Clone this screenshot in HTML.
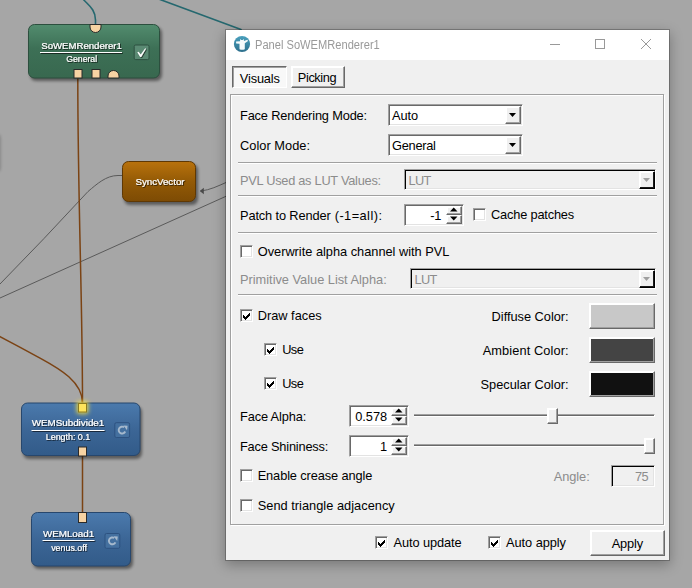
<!DOCTYPE html>
<html><head><meta charset="utf-8"><title>Panel SoWEMRenderer1</title>
<style>
html,body{margin:0;padding:0}
body{width:692px;height:588px;overflow:hidden;background:#a6a6a6;position:relative;font-family:"Liberation Sans",sans-serif}
#net{position:absolute;left:0;top:0}
.node{position:absolute;box-sizing:border-box;border-radius:7px;box-shadow:2px 3px 4px rgba(0,0,0,.35)}
.nt{position:absolute;color:#fff;font-size:9.7px;line-height:12px;white-space:nowrap;text-shadow:1px 1px 1px rgba(0,0,0,.7)}
.ul{position:absolute;height:1px;background:#fff;box-shadow:1px 1px 1px rgba(0,0,0,.5)}
.win{position:absolute;left:226px;top:30px;width:443px;height:530px;background:#f0f0f0;box-shadow:0 0 0 1px rgba(0,0,0,.24),0 4px 12px 1px rgba(0,0,0,.28)}
.tb{position:absolute;left:0;top:0;width:443px;height:30px;background:#fff}
.t{position:absolute;font-size:12.8px;line-height:16px;color:#000;white-space:nowrap}
.t.dis{color:#8c8c8c}
.abs{position:absolute;box-sizing:border-box}
.sunk{border:1px solid;border-color:#a0a0a0 #fff #fff #a0a0a0;box-shadow:inset 1px 1px 0 #696969,inset -1px -1px 0 #e3e3e3}
.rais{border:1px solid;border-color:#fff #696969 #696969 #fff;box-shadow:inset -1px -1px 0 #a0a0a0,inset 1px 1px 0 #fff;background:#f0f0f0}
.sunkd{box-shadow:inset 1px 1px 0 #000,inset -1px -1px 0 #e3e3e3}
.raisd{border-color:#fff #000 #000 #fff;box-shadow:inset -1px -1px 0 #1a1a1a,inset 1px 1px 0 #fff}
.sep{position:absolute;left:238px;width:419px;height:1px;background:#a0a0a0;box-shadow:0 1px 0 #fff}
.cb{position:absolute;box-sizing:border-box;width:13px;height:13px;background:#fff;border:1px solid;border-color:#a0a0a0 #fff #fff #a0a0a0;box-shadow:inset 1px 1px 0 #696969,inset -1px -1px 0 #e3e3e3}
</style></head><body>
<svg id="net" width="692" height="588" viewBox="0 0 692 588" font-family="Liberation Sans, sans-serif">
<defs>
<linearGradient id="gG" x1="0" y1="0" x2="0" y2="1"><stop offset="0" stop-color="#528c6e"/><stop offset=".45" stop-color="#3d7056"/><stop offset="1" stop-color="#38684f"/></linearGradient>
<linearGradient id="gO" x1="0" y1="0" x2="0" y2="1"><stop offset="0" stop-color="#b9720c"/><stop offset=".5" stop-color="#935a06"/><stop offset="1" stop-color="#7d4b04"/></linearGradient>
<linearGradient id="gB" x1="0" y1="0" x2="0" y2="1"><stop offset="0" stop-color="#4b7aad"/><stop offset=".5" stop-color="#3c6696"/><stop offset="1" stop-color="#325b89"/></linearGradient>
<filter id="sh" x="-20%" y="-20%" width="150%" height="160%"><feGaussianBlur stdDeviation="1.6"/></filter>
<filter id="ts" x="-10%" y="-30%" width="130%" height="180%"><feDropShadow dx="0.8" dy="0.8" stdDeviation="0.4" flood-color="#000" flood-opacity=".75"/></filter>
<filter id="glow" x="-100%" y="-100%" width="300%" height="300%"><feGaussianBlur stdDeviation="2"/></filter>
</defs>
<!-- off-screen node shadow at left -->
<rect x="-8" y="134" width="8.500" height="38" rx="4" fill="#000" opacity=".22" filter="url(#sh)"/>
<!-- connections -->
<g fill="none" stroke-linecap="round">
<path d="M83 -1 C88 5 95.5 9 95.5 20 L95.5 25" stroke="#25686f" stroke-width="1.6"/>
<path d="M160 -0.5 L241 29.5" stroke="#25686f" stroke-width="1.6"/>
<path d="M122 175.5 L118 175.5 C106 175.5 97 184 88 191.5 L44 238.500 L0 284" stroke="#5a5a5a" stroke-width="1"/>
<path d="M226 196.3 L0 298" stroke="#5a5a5a" stroke-width="1"/>
<path d="M226 182.5 C218 186 210 190 201 191" stroke="#5a5a5a" stroke-width="1"/>
<path d="M77.800 78 C77.800 200 82.5 300 82.5 403" stroke="#7b4314" stroke-width="1.500"/>
<path d="M0 336.6 L20.2 347.3 L40.5 358.4 C60 369 82.5 382 82.5 403" stroke="#7b4314" stroke-width="1.500"/>
<path d="M82.5 456 L82.5 513" stroke="#7b4314" stroke-width="1.500"/>
</g>
<path d="M199.800 191 L203.800 187.800 L203.800 194.200 Z" fill="#4a4a4a"/>
<!-- node shadows -->
<g fill="#000" opacity=".45" filter="url(#sh)">
<rect x="30" y="27" width="132" height="54" rx="6"/>
<rect x="124" y="164" width="74" height="41" rx="6"/>
<rect x="23" y="406" width="119" height="53" rx="6"/>
<rect x="33" y="515" width="100" height="54" rx="6"/>
</g>
<!-- nodes -->
<rect x="28.5" y="24.5" width="131" height="53.500" rx="6" fill="url(#gG)" stroke="#2c4f3e"/>
<rect x="122.500" y="161.500" width="73" height="40" rx="6" fill="url(#gO)" stroke="#5f3803"/>
<rect x="21.5" y="403" width="118.500" height="52.500" rx="6" fill="url(#gB)" stroke="#27476d"/>
<rect x="31.5" y="512.500" width="99" height="53.500" rx="6" fill="url(#gB)" stroke="#27476d"/>
<!-- connectors -->
<g fill="#f7d3a3" stroke="#2a2a2a" stroke-width="1">
<path d="M90 24.500 L101 24.500 L101 27 A5.500 5.500 0 0 1 90 27 Z"/>
<rect x="74" y="69.500" width="8" height="8.500"/>
<rect x="92" y="69.500" width="8" height="8.500"/>
<path d="M108 78 L108 76 A5.500 5.500 0 0 1 119 76 L119 78 Z"/>
<rect x="78.500" y="447" width="8" height="9"/>
<rect x="78.500" y="512.500" width="8" height="10"/>
</g>
<rect x="76.500" y="401" width="12" height="13" rx="3" fill="#ffe23a" opacity=".8" filter="url(#glow)"/>
<rect x="78.500" y="403.500" width="8" height="8.500" fill="#ffe45c" stroke="#8a7a20" stroke-width="1"/>
<!-- icons -->
<rect x="134.200" y="45" width="14.800" height="14.600" rx="1.500" fill="#5a8a73" stroke="#2d5040"/>
<path d="M137.300 52.300 L138.600 51.700 L140.700 54.600 L145.200 48.300 L146 48.800 L141.200 57 L140.200 57 Z" fill="#fff" filter="url(#ts)"/>
<g transform="translate(114.300 422.200)">
<rect x="0.500" y="0.500" width="14.800" height="14.800" rx="1.500" fill="#44709f" stroke="#2d5280"/>
<path d="M10.900 9.300 A3.400 3.400 0 1 1 9.800 5.100" fill="none" stroke="#a6b9cd" stroke-width="1.900"/>
<path d="M9.100 3.300 L13.300 3.500 L12.700 8.100 Z" fill="#a6b9cd"/>
</g>
<g transform="translate(104.500 533)">
<rect x="0.500" y="0.500" width="14.800" height="14.800" rx="1.500" fill="#44709f" stroke="#2d5280"/>
<path d="M10.900 9.300 A3.400 3.400 0 1 1 9.800 5.100" fill="none" stroke="#a6b9cd" stroke-width="1.900"/>
<path d="M9.100 3.300 L13.300 3.500 L12.700 8.100 Z" fill="#a6b9cd"/>
</g>
<!-- node text -->
<g fill="#fff" stroke="#fff" stroke-width=".15" filter="url(#ts)">
<text x="41.300" y="48.500" font-size="9.600" textLength="80.500" lengthAdjust="spacingAndGlyphs">SoWEMRenderer1</text>
<rect x="40" y="52" width="82" height="1" stroke="none"/>
<text x="66.300" y="61.800" font-size="8.700" textLength="30.800" lengthAdjust="spacingAndGlyphs">General</text>
<text x="135.400" y="184.900" font-size="9.800" textLength="49.200" lengthAdjust="spacingAndGlyphs">SyncVector</text>
<text x="31.700" y="426.400" font-size="9.700" textLength="72.600" lengthAdjust="spacingAndGlyphs">WEMSubdivide1</text>
<rect x="31.500" y="430" width="73" height="1" stroke="none"/>
<text x="45.800" y="439.900" font-size="8.700" textLength="44.400" lengthAdjust="spacingAndGlyphs">Length: 0.1</text>
<text x="43" y="537.300" font-size="9.700" textLength="51.100" lengthAdjust="spacingAndGlyphs">WEMLoad1</text>
<rect x="42.500" y="540" width="52" height="1" stroke="none"/>
<text x="51.200" y="550.700" font-size="8.700" textLength="35.800" lengthAdjust="spacingAndGlyphs">venus.off</text>
</g>
</svg>
<div class="win"><div class="tb"></div></div>
<!-- title bar -->
<svg class="abs" style="left:226px;top:30px" width="443" height="30" viewBox="226 30 443 30">
<defs><linearGradient id="ic" x1="0" y1="0" x2="0" y2="1"><stop offset="0" stop-color="#4aa0bd"/><stop offset="1" stop-color="#2d6f8c"/></linearGradient></defs>
<circle cx="242" cy="44" r="8.100" fill="url(#ic)"/>
<path d="M236 41.600 L240.100 41.200 L240 38.900 L241.200 39.900 L242.800 39.900 L244 38.900 L243.900 41.100 L247.400 39.800 L248 41 L244.800 43.300 L244.800 49.300 Q242.200 50.400 239.500 49.300 L239.500 43.700 L236.200 43.600 Z" fill="#f6fafb"/>
<g stroke="#999" stroke-width="1" fill="none">
<path d="M550 44.500 H560"/>
<rect x="595.500" y="39.500" width="9" height="9"/>
<path d="M641 39 L651 49 M651 39 L641 49"/>
</g>
</svg>
<div class="t" style="left:254.8px;top:37.200px;font-size:12px;transform:scaleX(.926);transform-origin:0 0;color:#999">Panel SoWEMRenderer1</div>
<!-- tabs -->
<div class="abs" style="left:232px;top:66px;width:55px;height:22px;border:1px solid;border-color:#696969 #fff #fff #696969;box-shadow:inset 1px 1px 0 #a0a0a0;background:#f8f8f8"></div>
<div class="abs rais" style="left:291px;top:66px;width:54px;height:22px"></div>
<!-- group frame -->
<div class="abs" style="left:230px;top:94px;width:434px;height:431px;border:1px solid #a0a0a0;box-shadow:inset 1px 1px 0 #fff,1px 1px 0 #fff"></div>
<!-- combos -->
<div class="abs sunk" style="left:388px;top:104px;width:135px;height:22px;background:#fff"></div>
<div class="abs rais" style="left:505px;top:106px;width:16px;height:18px"></div>
<svg class="abs" style="left:509px;top:113px" width="7" height="4"><path d="M0 0H7L3.500 4Z" fill="#000"/></svg>
<div class="abs sunk" style="left:388px;top:134px;width:135px;height:22px;background:#fff"></div>
<div class="abs rais" style="left:505px;top:136px;width:16px;height:18px"></div>
<svg class="abs" style="left:509px;top:143px" width="7" height="4"><path d="M0 0H7L3.500 4Z" fill="#000"/></svg>
<div class="sep" style="top:162px"></div>
<div class="abs sunk sunkd" style="left:404px;top:169px;width:252px;height:21px;background:#f0f0f0"></div>
<div class="abs rais raisd" style="left:639px;top:171px;width:16px;height:18px"></div>
<svg class="abs" style="left:643px;top:178px" width="7" height="4"><path d="M0 0H7L3.500 4Z" fill="#a0a0a0"/></svg>
<div class="sep" style="top:195px"></div>
<!-- spin patch -->
<div class="abs sunk" style="left:404px;top:204px;width:60px;height:22px;background:#fff"></div>
<div class="abs rais" style="left:446px;top:206px;width:16px;height:9px"></div>
<div class="abs rais" style="left:446px;top:215px;width:16px;height:9px"></div>
<svg class="abs" style="left:450px;top:207px" width="8" height="14"><path d="M0 4.500H7.500L3.750 0.500Z M0 9.500H7.500L3.750 13.500Z" fill="#000"/></svg>
<div class="cb" style="left:473px;top:208px"></div>
<div class="sep" style="top:232px"></div>
<div class="cb" style="left:240px;top:245px"></div>
<div class="abs sunk sunkd" style="left:410px;top:268px;width:246px;height:21px;background:#f0f0f0"></div>
<div class="abs rais raisd" style="left:639px;top:270px;width:16px;height:18px"></div>
<svg class="abs" style="left:643px;top:277px" width="7" height="4"><path d="M0 0H7L3.500 4Z" fill="#a0a0a0"/></svg>
<div class="sep" style="top:294px"></div>
<!-- draw faces -->
<div class="cb" style="left:240px;top:309px"></div>
<svg class="abs" style="left:243px;top:313px" width="7" height="7" shape-rendering="crispEdges"><path d="M0 2h1v3h-1zM1 3h1v3h-1zM2 4h1v3h-1zM3 3h1v3h-1zM4 2h1v3h-1zM5 1h1v3h-1zM6 0h1v3h-1z" fill="#000"/></svg>
<div class="cb" style="left:264px;top:343px"></div>
<svg class="abs" style="left:267px;top:347px" width="7" height="7" shape-rendering="crispEdges"><path d="M0 2h1v3h-1zM1 3h1v3h-1zM2 4h1v3h-1zM3 3h1v3h-1zM4 2h1v3h-1zM5 1h1v3h-1zM6 0h1v3h-1z" fill="#000"/></svg>
<div class="cb" style="left:264px;top:377px"></div>
<svg class="abs" style="left:267px;top:381px" width="7" height="7" shape-rendering="crispEdges"><path d="M0 2h1v3h-1zM1 3h1v3h-1zM2 4h1v3h-1zM3 3h1v3h-1zM4 2h1v3h-1zM5 1h1v3h-1zM6 0h1v3h-1z" fill="#000"/></svg>
<!-- color buttons -->
<div class="abs rais" style="left:589px;top:303px;width:66px;height:26px;background:#c8c8c8"></div>
<div class="abs rais" style="left:589px;top:337px;width:66px;height:26px;background:#444"></div>
<div class="abs rais" style="left:589px;top:371px;width:66px;height:26px;background:#111"></div>
<!-- face alpha -->
<div class="abs sunk" style="left:349px;top:405px;width:60px;height:22px;background:#fff"></div>
<div class="abs rais" style="left:391px;top:407px;width:16px;height:9px"></div>
<div class="abs rais" style="left:391px;top:416px;width:16px;height:9px"></div>
<svg class="abs" style="left:395px;top:408px" width="8" height="14"><path d="M0 4.500H7.500L3.750 0.500Z M0 9.500H7.500L3.750 13.500Z" fill="#000"/></svg>
<div class="abs" style="left:414px;top:414px;width:241px;height:3px;border-top:1px solid #a0a0a0;border-bottom:1px solid #fff;border-right:1px solid #fff;background:#696969"></div>
<div class="abs rais" style="left:547px;top:408px;width:11px;height:16px"></div>
<div class="abs sunk" style="left:349px;top:435px;width:60px;height:22px;background:#fff"></div>
<div class="abs rais" style="left:391px;top:437px;width:16px;height:9px"></div>
<div class="abs rais" style="left:391px;top:446px;width:16px;height:9px"></div>
<svg class="abs" style="left:395px;top:438px" width="8" height="14"><path d="M0 4.500H7.500L3.750 0.500Z M0 9.500H7.500L3.750 13.500Z" fill="#000"/></svg>
<div class="abs" style="left:414px;top:444px;width:241px;height:3px;border-top:1px solid #a0a0a0;border-bottom:1px solid #fff;border-right:1px solid #fff;background:#696969"></div>
<div class="abs rais" style="left:644px;top:438px;width:11px;height:16px"></div>
<!-- crease -->
<div class="cb" style="left:240px;top:469px"></div>
<div class="abs sunk sunkd" style="left:611px;top:465px;width:44px;height:22px;background:#f0f0f0"></div>
<div class="cb" style="left:240px;top:499px"></div>
<!-- bottom -->
<div class="cb" style="left:375px;top:536px"></div>
<svg class="abs" style="left:378px;top:540px" width="7" height="7" shape-rendering="crispEdges"><path d="M0 2h1v3h-1zM1 3h1v3h-1zM2 4h1v3h-1zM3 3h1v3h-1zM4 2h1v3h-1zM5 1h1v3h-1zM6 0h1v3h-1z" fill="#000"/></svg>
<div class="cb" style="left:488px;top:536px"></div>
<svg class="abs" style="left:491px;top:540px" width="7" height="7" shape-rendering="crispEdges"><path d="M0 2h1v3h-1zM1 3h1v3h-1zM2 4h1v3h-1zM3 3h1v3h-1zM4 2h1v3h-1zM5 1h1v3h-1zM6 0h1v3h-1z" fill="#000"/></svg>
<div class="abs rais" style="left:590px;top:530px;width:75px;height:26px"></div>
<div class="t " style="left:240.0px;top:107.9px;letter-spacing:-0.16px">Face Rendering Mode:</div>
<div class="t " style="left:240.0px;top:137.9px;letter-spacing:0.03px">Color Mode:</div>
<div class="t dis" style="left:240.0px;top:172.9px;letter-spacing:-0.27px">PVL Used as LUT Values:</div>
<div class="t " style="left:240.0px;top:207.9px;letter-spacing:-0.13px">Patch to Render</div>
<div class="t " style="left:334.7px;top:207.9px;letter-spacing:0.44px">(-1=all):</div>
<div class="t " style="left:491.0px;top:206.9px;letter-spacing:-0.18px">Cache patches</div>
<div class="t " style="left:257.7px;top:243.9px;letter-spacing:-0.01px">Overwrite alpha channel with PVL</div>
<div class="t dis" style="left:240.0px;top:271.9px;letter-spacing:-0.01px">Primitive Value List Alpha:</div>
<div class="t " style="left:257.7px;top:307.9px;letter-spacing:-0.00px">Draw faces</div>
<div class="t " style="left:282.2px;top:341.9px;letter-spacing:-0.59px">Use</div>
<div class="t " style="left:282.2px;top:375.9px;letter-spacing:-0.59px">Use</div>
<div class="t " style="right:123.4px;top:308.9px;letter-spacing:-0.02px">Diffuse Color:</div>
<div class="t " style="right:123.3px;top:342.8px;letter-spacing:0.10px">Ambient Color:</div>
<div class="t " style="right:123.4px;top:376.9px;letter-spacing:-0.01px">Specular Color:</div>
<div class="t " style="left:240.0px;top:408.9px;letter-spacing:-0.14px">Face Alpha:</div>
<div class="t " style="left:240.0px;top:438.9px;letter-spacing:-0.20px">Face Shininess:</div>
<div class="t " style="left:257.7px;top:467.9px;letter-spacing:-0.11px">Enable crease angle</div>
<div class="t dis" style="left:553.7px;top:469.0px;letter-spacing:-0.05px">Angle:</div>
<div class="t " style="left:257.7px;top:497.9px;letter-spacing:0.02px">Send triangle adjacency</div>
<div class="t " style="left:393.5px;top:534.9px;letter-spacing:-0.09px">Auto update</div>
<div class="t " style="left:506.0px;top:534.9px;letter-spacing:-0.05px">Auto apply</div>
<div class="t " style="left:611.7px;top:535.9px;letter-spacing:-0.12px">Apply</div>
<div class="t " style="left:239.8px;top:70.9px;letter-spacing:-0.15px">Visuals</div>
<div class="t " style="left:297.8px;top:69.9px;letter-spacing:-0.40px">Picking</div>
<div class="t " style="left:392.1px;top:108.0px;letter-spacing:-0.08px">Auto</div>
<div class="t " style="left:392.1px;top:138.0px;letter-spacing:-0.29px">General</div>
<div class="t dis" style="left:408.4px;top:172.9px;letter-spacing:-0.60px">LUT</div>
<div class="t dis" style="left:414.4px;top:271.9px;letter-spacing:-0.60px">LUT</div>
<div class="t " style="right:250.9px;top:208.0px;letter-spacing:-0.30px">-1</div>
<div class="t " style="right:304.9px;top:408.9px;letter-spacing:-0.01px">0.578</div>
<div class="t " style="right:305.5px;top:438.9px;letter-spacing:-0.60px">1</div>
<div class="t dis" style="right:44.0px;top:469.0px;letter-spacing:-0.60px">75</div></body></html>
